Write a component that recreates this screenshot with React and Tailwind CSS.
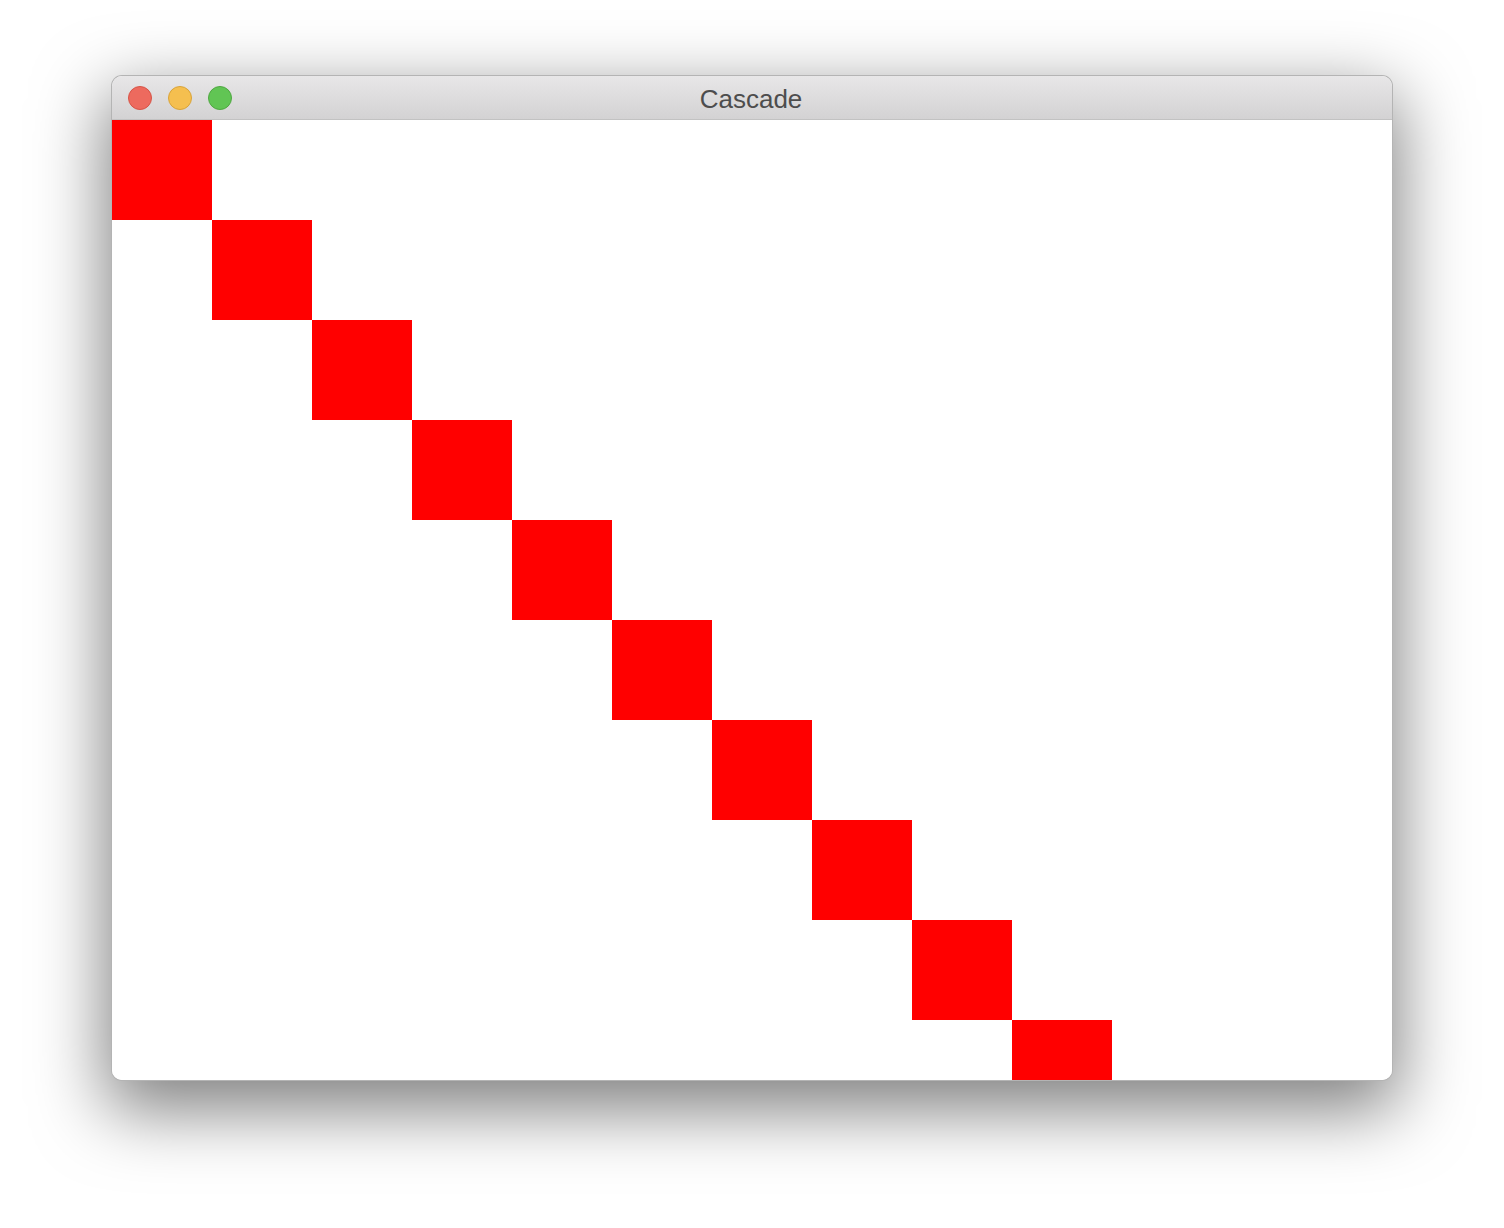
import React from "react";

const offsets = [
  "ml-[0px]",
  "ml-[100px]",
  "ml-[200px]",
  "ml-[300px]",
  "ml-[400px]",
  "ml-[500px]",
  "ml-[600px]",
  "ml-[700px]",
  "ml-[800px]",
  "ml-[900px]",
];

export default function App() {
  return (
    <div className="w-[1504px] h-[1228px] bg-white pt-[76px] pl-[112px] overflow-hidden">
      <div className="w-[1280px] h-[1004px] rounded-[10px] overflow-hidden bg-white flex flex-col ring-1 ring-[#b4b4b4] shadow-[0_24px_70px_6px_rgba(0,0,0,0.5)]">
        <div className="h-[43px] shrink-0 bg-gradient-to-b from-[#e8e7e8] to-[#d3d2d3] border-b border-[#c2c2c2] flex items-center relative box-content">
          <div className="flex items-center gap-[16px] pl-[16px] pt-[1px]">
            <div className="w-[24px] h-[24px] rounded-full bg-[#ed6a5e] border border-[#d65447]" />
            <div className="w-[24px] h-[24px] rounded-full bg-[#f5bf4f] border border-[#d8a33a]" />
            <div className="w-[24px] h-[24px] rounded-full bg-[#61c554] border border-[#50a742]" />
          </div>
          <div className="absolute inset-0 flex items-center justify-center text-[26px] text-[#4d4d4d] font-['Liberation_Sans',Arial,sans-serif] leading-none pt-[3px] pr-[2px]">
            Cascade
          </div>
        </div>
        <div className="flex-1 bg-white overflow-hidden flex flex-col">
          {offsets.map((cls, i) => (
            <div key={i} className={`w-[100px] h-[100px] shrink-0 bg-[#ff0000] ${cls}`} />
          ))}
        </div>
      </div>
    </div>
  );
}
